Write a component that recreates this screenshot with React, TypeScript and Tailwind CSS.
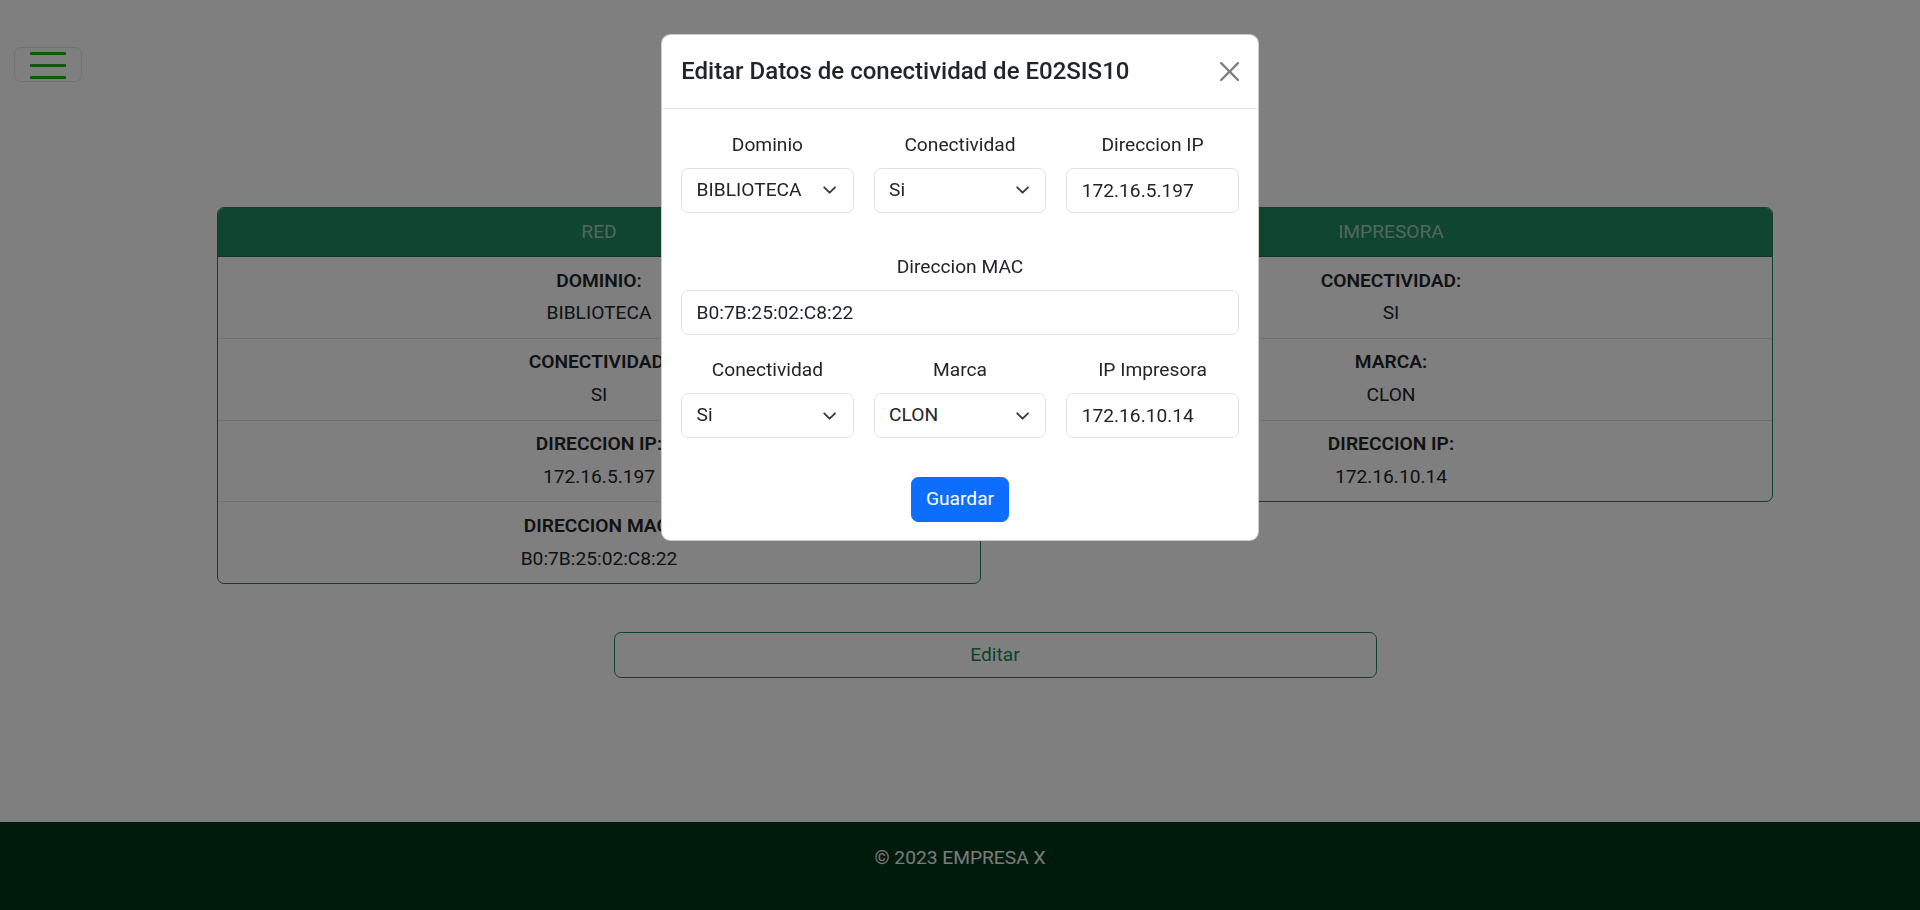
import { FC } from 'react';

const font = { fontFamily: 'Roboto, "Liberation Sans", sans-serif' };

interface Item {
  label: string;
  value: string;
}

const redItems: Item[] = [
  { label: 'DOMINIO:', value: 'BIBLIOTECA' },
  { label: 'CONECTIVIDAD:', value: 'SI' },
  { label: 'DIRECCION IP:', value: '172.16.5.197' },
  { label: 'DIRECCION MAC:', value: 'B0:7B:25:02:C8:22' },
];

const printerItems: Item[] = [
  { label: 'CONECTIVIDAD:', value: 'SI' },
  { label: 'MARCA:', value: 'CLON' },
  { label: 'DIRECCION IP:', value: '172.16.10.14' },
];

const InfoCard: FC<{ title: string; items: Item[] }> = ({ title, items }) => (
  <div className="border border-[#198754] rounded-[7px] overflow-hidden bg-white">
    <div className="bg-[#208a5e] text-white/60 text-center py-[9.6px] leading-[28.8px] border-b border-black/20">
      {title}
    </div>
    <div className="divide-y divide-[#dfdfdf]">
      {items.map((item) => (
        <div key={item.label} className="py-[9.6px] text-center">
          <div className="font-semibold leading-[28.8px] mb-[4px]">{item.label}</div>
          <div className="leading-[28.8px]">{item.value}</div>
        </div>
      ))}
    </div>
  </div>
);

const Chevron = () => (
  <svg
    className="absolute right-[14.4px] top-1/2 -translate-y-1/2 w-[19.2px] h-[14.4px] pointer-events-none"
    viewBox="0 0 16 16"
    fill="none"
  >
    <path d="m2 5 6 6 6-6" stroke="#343a40" strokeWidth="2" strokeLinecap="round" strokeLinejoin="round" />
  </svg>
);

const SelectField: FC<{ value: string; options: string[] }> = ({ value, options }) => (
  <div className="relative">
    <select
      defaultValue={value}
      style={font}
      className="appearance-none w-full h-[45.6px] border border-[#dee2e6] rounded-[7.2px] bg-white pl-[14.4px] pr-[40px] text-[19.2px] text-[#212529] outline-none"
    >
      {options.map((o) => (
        <option key={o}>{o}</option>
      ))}
    </select>
    <Chevron />
  </div>
);

const TextField: FC<{ value: string }> = ({ value }) => (
  <input
    defaultValue={value}
    style={font}
    className="w-full h-[45.6px] border border-[#dee2e6] rounded-[7.2px] bg-white px-[14.4px] text-[19.2px] text-[#212529] outline-none"
  />
);

const Label: FC<{ text: string }> = ({ text }) => (
  <div className="text-center leading-[28.8px] pt-[1.5px] mb-[8.1px]">{text}</div>
);

const EditModal = () => (
  <div className="fixed inset-0 z-50 flex justify-center items-start pt-[33.6px]">
    <div className="w-[598px] bg-white rounded-[9.6px] border border-black/20 text-[#212529]">
      {/* header */}
      <div className="flex items-center justify-between px-[19.2px] py-[18.5px] border-b border-[#dee2e6]">
        <h5 className="text-[24px] font-medium leading-[36px]">Editar Datos de conectividad de E02SIS10</h5>
        <button className="w-[19.2px] h-[19.2px] opacity-50">
          <svg viewBox="0 0 16 16" className="w-full h-full">
            <path
              fill="#000"
              d="M.293.293a1 1 0 0 1 1.414 0L8 6.586 14.293.293a1 1 0 1 1 1.414 1.414L9.414 8l6.293 6.293a1 1 0 0 1-1.414 1.414L8 9.414l-6.293 6.293a1 1 0 0 1-1.414-1.414L6.586 8 .293 1.707a1 1 0 0 1 0-1.414z"
            />
          </svg>
        </button>
      </div>

      {/* body */}
      <div className="px-[19.2px] pt-[20.7px] pb-[18.2px]">
        <div className="grid grid-cols-3 gap-x-[20px]">
          <div>
            <Label text="Dominio" />
            <SelectField value="BIBLIOTECA" options={['BIBLIOTECA', 'ADMINISTRACION']} />
          </div>
          <div>
            <Label text="Conectividad" />
            <SelectField value="Si" options={['Si', 'No']} />
          </div>
          <div>
            <Label text="Direccion IP" />
            <TextField value="172.16.5.197" />
          </div>
        </div>

        <div className="mt-[38px]">
          <Label text="Direccion MAC" />
          <TextField value="B0:7B:25:02:C8:22" />
        </div>

        <div className="grid grid-cols-3 gap-x-[20px] mt-[19.2px]">
          <div>
            <Label text="Conectividad" />
            <SelectField value="Si" options={['Si', 'No']} />
          </div>
          <div>
            <Label text="Marca" />
            <SelectField value="CLON" options={['CLON', 'HP', 'EPSON']} />
          </div>
          <div>
            <Label text="IP Impresora" />
            <TextField value="172.16.10.14" />
          </div>
        </div>

        <div className="flex justify-center mt-[38.4px]">
          <button className="bg-[#0d6efd] text-white text-[19.2px] leading-[28.8px] px-[14.4px] py-[7.2px] border border-[#0d6efd] rounded-[7.2px]">
            Guardar
          </button>
        </div>
      </div>
    </div>
  </div>
);

export default function App() {
  return (
    <div style={font} className="min-h-screen flex flex-col bg-white text-[19.2px] text-[#212529]">
      <div className="flex flex-1">
        {/* sidebar toggle */}
        <aside className="w-[70px] shrink-0">
          <button className="ml-[14px] mt-[47px] w-[68px] h-[35px] border border-black/10 rounded-[7px] flex items-center justify-center">
            <svg width="36" height="30" viewBox="0 0 36 30" className="mt-[3px]">
              <line x1="1" y1="2.5" x2="35" y2="2.5" stroke="#14b414" strokeWidth="3" strokeLinecap="round" />
              <line x1="1" y1="14.5" x2="35" y2="14.5" stroke="#14b414" strokeWidth="3" strokeLinecap="round" />
              <line x1="1" y1="26.5" x2="35" y2="26.5" stroke="#14b414" strokeWidth="3" strokeLinecap="round" />
            </svg>
          </button>
        </aside>

        <main className="flex-1">
          <div className="w-[1584px] mx-auto px-[14.4px] pt-[207px]">
            <div className="grid grid-cols-2 gap-x-[28.8px] items-start">
              <InfoCard title="RED" items={redItems} />
              <InfoCard title="IMPRESORA" items={printerItems} />
            </div>
            <div className="flex justify-center mt-[48px]">
              <button className="w-[763px] h-[45.6px] border border-[#198754] rounded-[7.2px] text-[#198754] leading-[28.8px]">
                Editar
              </button>
            </div>
          </div>
        </main>
      </div>

      <footer className="h-[88px] bg-[#003418] text-[#f5f5f5] text-center pt-[21.6px] leading-[28.8px]">
        © 2023 EMPRESA X
      </footer>

      {/* backdrop */}
      <div className="fixed inset-0 z-40 bg-black/50" />
      <EditModal />
    </div>
  );
}
